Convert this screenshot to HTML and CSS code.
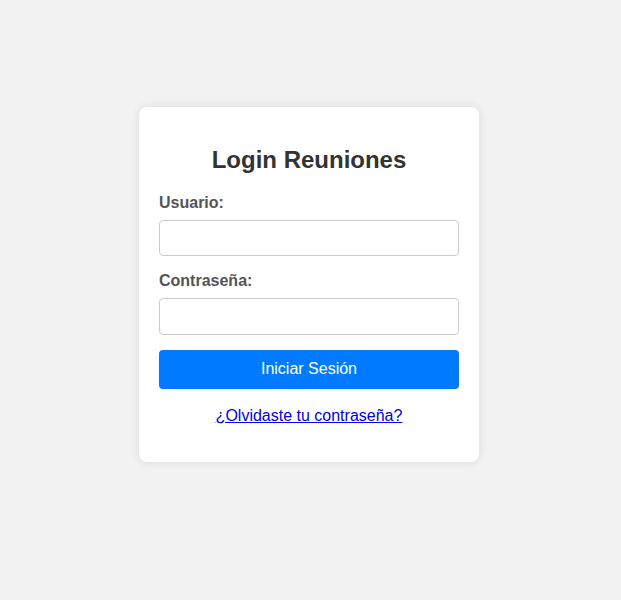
FILE: index.html
```html
<!DOCTYPE html>
<html lang="es">
<head>
<meta charset="utf-8">
<title>Login Reuniones</title>
<link rel="stylesheet" href="styles.css">
</head>
<body>
<div class="login-container">
  <h2 class="title">Login Reuniones</h2>
  <form class="login-form">
    <label class="field-label" for="usuario">Usuario:</label>
    <input class="field-input" type="text" id="usuario" name="usuario">
    <label class="field-label" for="password">Contraseña:</label>
    <input class="field-input" type="password" id="password" name="password">
    <button class="submit-btn" type="submit">Iniciar Sesión</button>
  </form>
  <p class="forgot"><a class="forgot-link" href="#">¿Olvidaste tu contraseña?</a></p>
</div>
</body>
</html>
```

FILE: styles.css
```css
html, body {
  margin: 0;
}
body {
  background: #f2f2f2;
  font-family: "Liberation Sans", Arial, sans-serif;
  display: flex;
  justify-content: center;
  align-items: flex-start;
  padding: 107px 3px 0 0;
  min-height: 600px;
  box-sizing: border-box;
}
.login-container {
  width: 300px;
  padding: 20px;
  background: #fff;
  border-radius: 8px;
  box-shadow: 0 0 10px rgba(0, 0, 0, 0.1);
}
.title {
  font-size: 24px;
  line-height: 27.6px;
  font-weight: bold;
  color: #333;
  text-align: center;
  margin: 19px 0 20px;
}
.login-form {
  display: flex;
  flex-direction: column;
}
.field-label {
  font-size: 16px;
  line-height: 18.4px;
  font-weight: bold;
  color: #555;
  margin-bottom: 8px;
}
.field-input {
  box-sizing: border-box;
  width: 100%;
  height: 36.4px;
  padding: 8px;
  font-size: 16px;
  line-height: 18.4px;
  font-family: "Liberation Sans", Arial, sans-serif;
  border: 1px solid #ccc;
  border-radius: 4px;
  margin: 0 0 15.5px;
}
.submit-btn {
  width: 100%;
  height: 38.4px;
  padding: 10px;
  font-size: 16px;
  line-height: 18.4px;
  font-family: "Liberation Sans", Arial, sans-serif;
  background: #007bff;
  color: #fff;
  border: none;
  border-radius: 4px;
}
.forgot {
  text-align: center;
  margin: 18.6px 0 16px;
  font-size: 16px;
  line-height: 18.4px;
}
.forgot-link {
  color: #0000ee;
  text-decoration: underline;
}
```
